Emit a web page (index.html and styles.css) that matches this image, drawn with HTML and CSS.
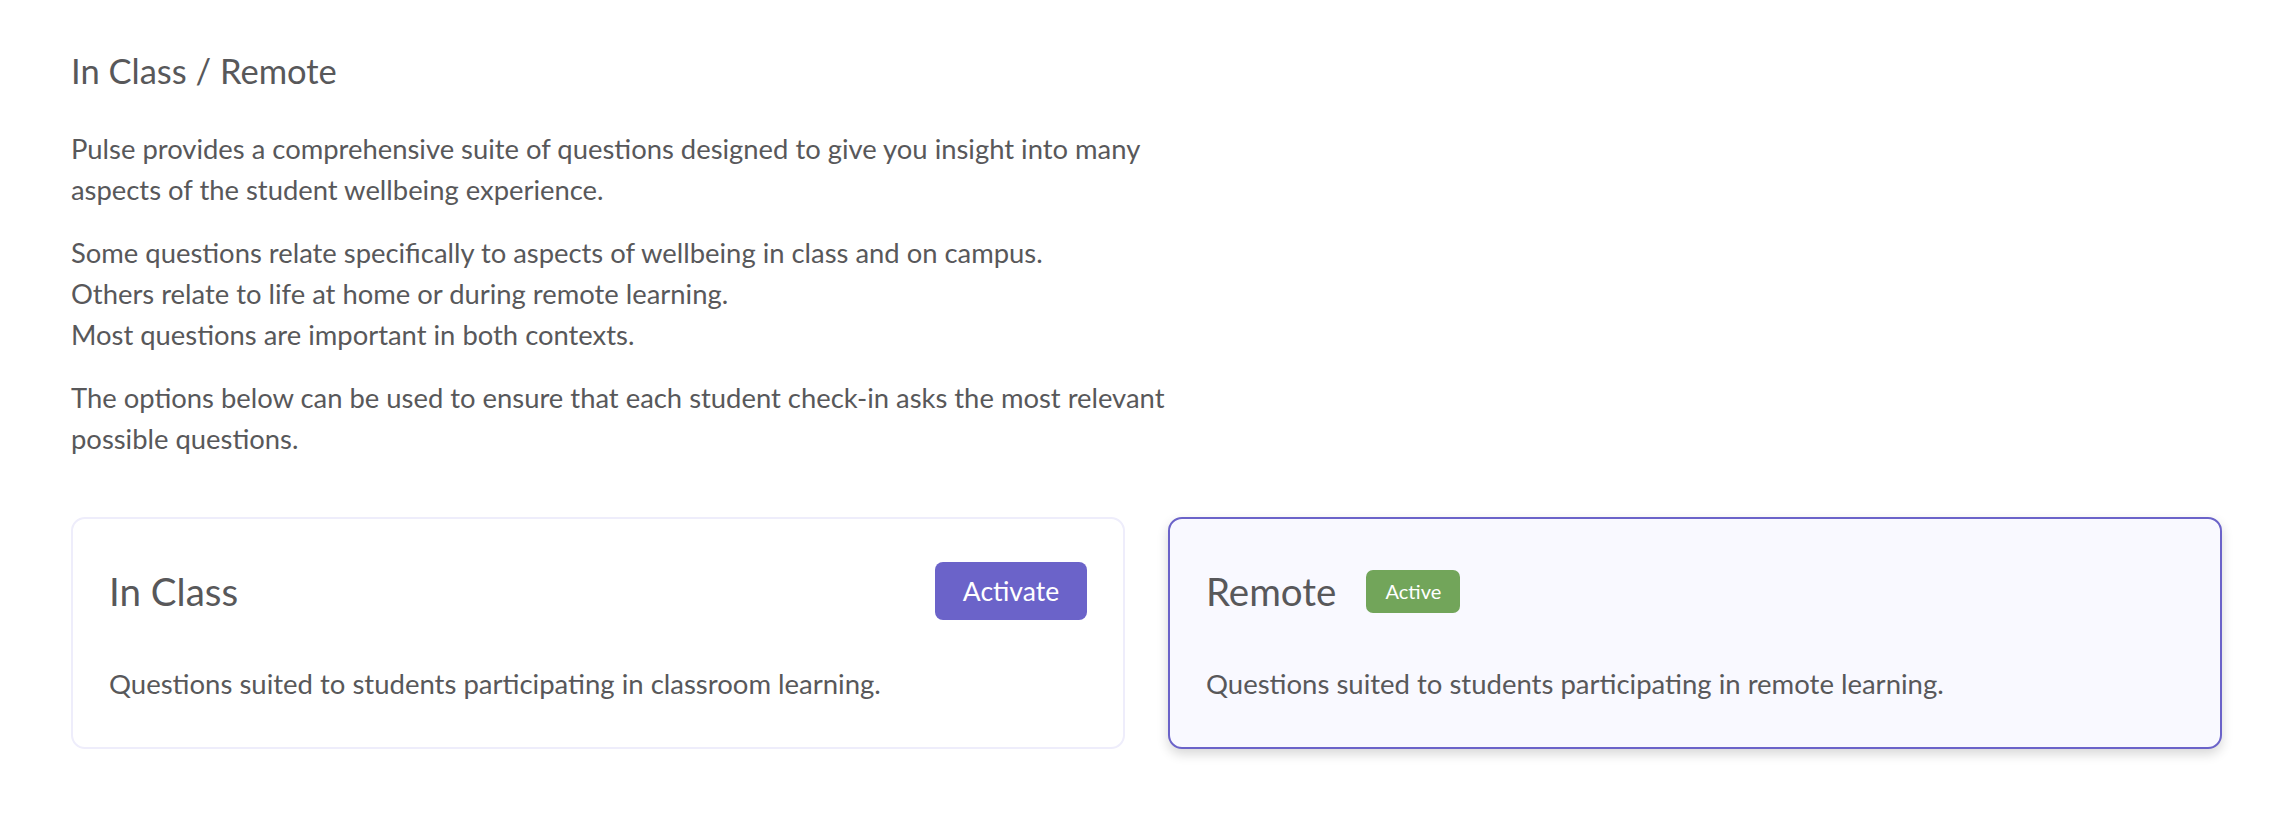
FILE: index.html
```html
<!DOCTYPE html>
<html lang="en">
<head>
    <meta charset="UTF-8">
    <meta name="viewport" content="width=device-width, initial-scale=1.0">
    <title>In Class / Remote</title>
    <link rel="stylesheet" href="styles.css">
</head>
<body>
    <main class="page">
        <h1 class="page-title">In Class / Remote</h1>
        <div class="intro">
            <p>Pulse provides a comprehensive suite of questions designed to give you insight into many aspects of the student wellbeing experience.</p>
            <p>Some questions relate specifically to aspects of wellbeing in class and on campus.<br>
                Others relate to life at home or during remote learning.<br>
                Most questions are important in both contexts.</p>
            <p>The options below can be used to ensure that each student check-in asks the most relevant possible questions.</p>
        </div>
        <section class="modes">
            <div class="mode-card">
                <div class="mode-head">
                    <h2>In Class</h2>
                    <button class="activate-btn" type="button">Activate</button>
                </div>
                <p class="mode-desc">Questions suited to students participating in classroom learning.</p>
            </div>
            <div class="mode-card is-active">
                <div class="mode-head">
                    <h2>Remote</h2>
                    <span class="badge">Active</span>
                </div>
                <p class="mode-desc">Questions suited to students participating in remote learning.</p>
            </div>
        </section>
    </main>
</body>
</html>
```

FILE: styles.css
```css
body {
    font-family: Lato, "Open Sans", sans-serif;
    margin: 0;
    padding: 0;
    background-color: #fff;
    color: #58585a;
}

.page {
    padding: 50px 48px 40px 71px;
}

.page-title {
    font-size: 34.5px;
    font-weight: normal;
    line-height: 42px;
    margin: 0 0 36px;
}

.intro {
    max-width: 1130px;
}

.intro p {
    font-size: 27.4px;
    line-height: 41px;
    margin: 0 0 22px;
}

.modes {
    display: grid;
    grid-template-columns: 1fr 1fr;
    gap: 43px;
    margin-top: 58px;
}

.mode-card {
    border: 2px solid #eeedfb;
    border-radius: 14px;
    padding: 43px 36px 43px;
    background-color: #fff;
}

.mode-card.is-active {
    border-color: #6b63c9;
    background-color: #f9f9ff;
    box-shadow: 0 5px 12px rgba(0, 0, 0, 0.16);
}

.mode-head {
    display: flex;
    align-items: center;
    justify-content: space-between;
    height: 58px;
}

.is-active .mode-head {
    justify-content: flex-start;
    gap: 30px;
}

.mode-head h2 {
    font-size: 38.5px;
    font-weight: normal;
    margin: 0;
}

.activate-btn {
    font-family: inherit;
    font-size: 26.5px;
    color: #fff;
    background-color: #6b63c9;
    border: none;
    border-radius: 8px;
    width: 152px;
    height: 58px;
    cursor: pointer;
}

.activate-btn:hover {
    background-color: #5a52b5;
}

.badge {
    display: inline-flex;
    align-items: center;
    justify-content: center;
    width: 94px;
    height: 43px;
    font-size: 20px;
    color: #fff;
    background-color: #72a55a;
    border-radius: 7px;
}

.mode-desc {
    font-size: 27.5px;
    line-height: 40px;
    margin: 44px 0 0;
}
```
